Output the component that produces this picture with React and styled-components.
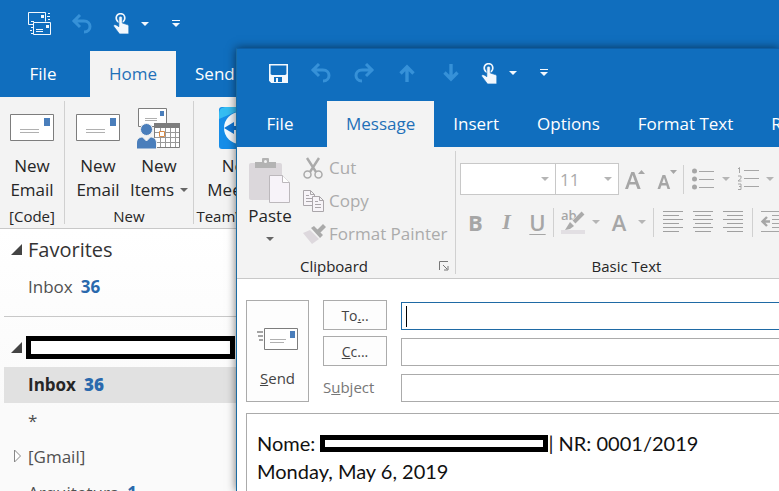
import React from "react";
import styled, { createGlobalStyle, css } from "styled-components";

const blue = "#106ebe";
const line = "#c8c8c8";
const dim = "#ababab";

const GlobalStyle = createGlobalStyle`
  * { box-sizing: border-box; }
  body { margin: 0; font-family: "Open Sans", "Noto Sans", sans-serif; font-size: 17px; color: #262626; }
  button, input, select, textarea { font: inherit; color: inherit; border-radius: 0; margin: 0; padding: 0; }
  button { border: 0; background: none; white-space: nowrap; }
  svg { display: block; flex: none; }
`;

const Desktop = styled.div`
  position: relative;
  min-height: 100vh;
  overflow: hidden;
  background: #fcfcfc;
`;

const MainWindow = styled.div`
  display: flex;
  flex-direction: column;
  height: 100vh;
  overflow: hidden;
`;

const ComposeWindow = styled.section`
  position: absolute;
  top: 48px;
  left: 236px;
  right: 0;
  bottom: 0;
  display: flex;
  flex-direction: column;
  overflow: hidden;
  background: #fff;
  border-top: 1px solid #0d5ea5;
  border-left: 1px solid #1a6ba3;
  box-shadow: 0 0 9px rgba(0, 0, 0, 0.55);
`;

const QuickAccess = styled.header`
  display: flex;
  align-items: center;
  flex: none;
  height: ${(p) => p.$height}px;
  padding: 0 20px 4px;
  background: ${blue};
`;

const QuickButton = styled.button`
  display: flex;
  align-items: center;
  justify-content: center;
  flex: none;
  width: ${(p) => p.$width}px;
  height: 40px;
  color: ${(p) => (p.$muted ? "#3691d8" : "#f3f8fd")};
`;

const Tabs = styled.nav`
  display: flex;
  flex: none;
  height: 46px;
  background: ${blue};
`;

const Tab = styled.button`
  flex: none;
  padding: 0 19px 2px;
  background: ${(p) => (p.$active ? "#f3f3f3" : "transparent")};
  color: ${(p) => (p.$active ? "#1f70b8" : "#fff")};
  ${(p) => p.$file && css`
    width: 90px;
    padding: 0 4px 2px 0;
  `}
`;

const Ribbon = styled.div`
  display: flex;
  flex: none;
  height: 132px;
  padding: 4px 0;
  background: #f3f3f3;
  border-bottom: 1px solid ${line};
`;

const Group = styled.section`
  display: flex;
  flex-direction: column;
  flex: none;
  width: ${(p) => p.$width}px;
  border-right: 1px solid #d0d0d0;
`;

const GroupBody = styled.div`
  display: flex;
  flex: 1;
  justify-content: ${(p) => (p.$start ? "flex-start" : "center")};
`;

const GroupLabel = styled.div`
  display: flex;
  align-items: center;
  justify-content: center;
  height: 20px;
  margin-bottom: -2px;
  font-size: 15px;
  line-height: 20px;
  white-space: nowrap;
`;

const LabelText = styled.span`
  flex: 1;
  padding-right: 8px;
  text-align: center;
`;

const Launcher = styled.button`
  width: 16px;
  height: 16px;
`;

const LargeButton = styled.button`
  display: flex;
  flex-direction: column;
  align-items: center;
  width: ${(p) => p.$width}px;
  line-height: 24px;
`;

const LargeIcon = styled.span`
  display: flex;
  align-items: center;
  justify-content: center;
  height: ${(p) => p.$height || 53}px;
`;

const CaretLine = styled.span`
  display: flex;
  align-items: center;
  gap: 6px;
`;

const FolderPane = styled.nav`
  flex: 1;
  padding: 3px 0 0 4px;
  background: linear-gradient(#fff, #fafafa 180px);
`;

const FolderSection = styled.div`
  padding-bottom: ${(p) => (p.$ruled ? 11 : 0)}px;
  margin-bottom: ${(p) => (p.$ruled ? 13 : 0)}px;
  border-bottom: ${(p) => (p.$ruled ? `1px solid ${line}` : "0")};
`;

const FolderRow = styled.button`
  display: grid;
  grid-template-columns: 24px auto auto;
  justify-content: start;
  align-items: center;
  width: 100%;
  height: 36px;
  padding-bottom: 2px;
  text-align: left;
  color: ${(p) => (p.$selected ? "#262626" : "#505050")};
  font-weight: ${(p) => (p.$selected ? 700 : 400)};
  background: ${(p) => (p.$selected ? "#e1e1e1" : "transparent")};
`;

const FolderHeading = styled(FolderRow)`
  height: 37px;
  font-size: 20px;
  color: #333;
`;

const TwistySlot = styled.span`
  padding-left: 7px;
`;

const Count = styled.b`
  margin-left: 8px;
  color: #2a69ad;
`;

const Redaction = styled.span`
  display: inline-block;
  border: 5px solid #000;
  background: #fff;
  width: ${(p) => p.$width}px;
  height: ${(p) => p.$height}px;
`;

const AccountBox = styled(Redaction)`
  margin-left: -2px;
`;

const PasteButton = styled(LargeButton)`
  margin-left: 3px;
  padding-top: 4px;
`;

const ClipboardList = styled.div`
  display: flex;
  flex-direction: column;
  padding-left: 3px;
`;

const CommandButton = styled.button`
  display: grid;
  grid-template-columns: 26px auto;
  justify-content: start;
  align-items: center;
  height: 33px;
  color: ${dim};
  text-align: left;
`;

const FontTools = styled.div`
  display: flex;
  flex-direction: column;
  gap: 11px;
  padding: 12px 0 0 4px;
`;

const ToolRow = styled.div`
  display: flex;
  align-items: center;
  height: 32px;
  color: ${dim};
`;

const ToolButton = styled.button`
  display: flex;
  align-items: center;
  justify-content: center;
  flex: none;
  width: ${(p) => p.$width}px;
  height: 30px;
  color: #a6a6a6;
`;

const Letter = styled.span`
  font-size: 22px;
  line-height: 28px;
  font-weight: ${(p) => (p.$bold ? 700 : 600)};
  font-style: ${(p) => (p.$italic ? "italic" : "normal")};
  font-family: ${(p) => (p.$italic ? '"Liberation Serif", serif' : "inherit")};
  text-decoration: ${(p) => (p.$underline ? "underline" : "none")};
  text-decoration-thickness: 1px;
  text-underline-offset: 3px;
`;

const Rule = styled.span`
  flex: none;
  width: 1px;
  height: 29px;
  margin-left: ${(p) => (p.$spaced ? 7 : 0)}px;
  background: #d0d0d0;
`;

const Combo = styled.span`
  display: grid;
  grid-template-columns: 1fr 14px;
  align-items: center;
  flex: none;
  width: ${(p) => p.$width}px;
  height: 32px;
  margin-right: ${(p) => (p.$joined ? -1 : 0)}px;
  border: 1px solid ${line};
  background: #fff;
`;

const ComboSelect = styled.select`
  grid-area: 1 / 1 / 2 / 3;
  width: 100%;
  height: 30px;
  padding-left: 4px;
  appearance: none;
  border: 0;
  background: transparent;
  color: ${dim};
`;

const ComboCaret = styled.span`
  grid-area: 1 / 2;
  pointer-events: none;
`;

const Form = styled.form`
  display: flex;
  flex-direction: column;
  flex: 1;
  padding: 21px 0 0 9px;
`;

const Envelope = styled.div`
  display: grid;
  grid-template-columns: 63px 64px 1fr;
  grid-template-rows: repeat(3, 30px);
  gap: 6px 14px;
  margin: 0 -2px 11px 0;
  color: #444;
`;

const SendButton = styled.button`
  grid-row: 1 / 4;
  display: flex;
  flex-direction: column;
  align-items: center;
  gap: 18px;
  padding-top: 27px;
  border: 1px solid #ababab;
  background: #fdfdfd;
  font-size: 15px;
`;

const RecipientButton = styled.button`
  border: 1px solid #ababab;
  background: #fdfdfd;
  font-size: 14px;
`;

const SubjectLabel = styled.label`
  align-self: center;
  color: #777;
  font-size: 15px;
`;

const Field = styled.span`
  display: flex;
  align-items: center;
  align-self: end;
  height: 28px;
  padding-left: 4px;
  border: 1px solid ${(p) => (p.$active ? "#1f6aa5" : "#ababab")};
`;

const TextCursor = styled.span`
  width: 1px;
  height: 21px;
  background: #000;
`;

const FieldInput = styled.input`
  flex: 1;
  min-width: 0;
  height: 24px;
  border: 0;
  outline: 0;
  background: transparent;
`;

const Message = styled.article`
  flex: 1;
  padding: 15px 10px;
  border: solid #ababab;
  border-width: 1px 0 0 1px;
  font-family: Lato, "Open Sans", sans-serif;
  font-size: 20px;
  line-height: 28px;
  color: #111;
`;

const MessageLine = styled.p`
  display: flex;
  align-items: center;
  margin: 0;
  white-space: pre;
`;

const Caret = ({ color = "currentColor" }) => (
  <svg width="8" height="4" viewBox="0 0 8 4" fill={color}><path d="M0 0h8L4 4z" /></svg>
);
const CustomizeIcon = () => (
  <svg width="8" height="8" viewBox="0 0 8 8" fill="currentColor"><path d="M0 0h8v1H0zM0 3h8L4 7z" /></svg>
);
const UndoIcon = () => (
  <svg width="22" height="20" viewBox="0 0 22 20" fill="none" stroke="currentColor" strokeWidth="3">
    <path d="M2 7h11c8 0 8 11 0 11M9 1L3 7l6 6" />
  </svg>
);
const RedoIcon = () => (
  <svg width="22" height="20" viewBox="0 0 22 20" fill="none" stroke="currentColor" strokeWidth="3">
    <path d="M20 7H9c-8 0-8 11 0 11M13 1l6 6-6 6" />
  </svg>
);
const UpIcon = () => (
  <svg width="16" height="18" viewBox="0 0 16 18" fill="none" stroke="currentColor" strokeWidth="3.4"><path d="M8 18V3M1.5 9.5L8 3l6.5 6.5" /></svg>
);
const DownIcon = () => (
  <svg width="16" height="18" viewBox="0 0 16 18" fill="none" stroke="currentColor" strokeWidth="3.4"><path d="M8 0v15M1.5 8.5L8 15l6.5-6.5" /></svg>
);
const TouchIcon = () => (
  <svg width="16" height="21" viewBox="0 0 16 21">
    <circle cx="7.5" cy="5" r="4.3" fill="none" stroke="currentColor" strokeWidth="1.7" />
    <path fill="currentColor" stroke={blue} strokeWidth=".7" d="M5.8 5c0-2.4 3.5-2.4 3.5 0v5l5 1.6c1 .4 1.5 1 1.5 2V21H6.5L.5 13c.3-2 2.5-1.7 5.3.7z" />
  </svg>
);
const SaveIcon = () => (
  <svg width="19" height="19" viewBox="0 0 19 19">
    <path fill="none" stroke="currentColor" strokeWidth="1.6" d="M.8.8h17.4v17.4H2.5L.8 16.5z" />
    <path fill="currentColor" d="M1 10l2 1h13l2-1v8.5H2.5L1 17z" />
    <path fill={blue} d="M5 13h9v5H5z" /><path fill="currentColor" d="M7 14h2v4H7zM13 13h1.5v5H13z" />
  </svg>
);
const SendReceiveIcon = () => (
  <svg width="24" height="24" viewBox="0 0 24 24" fill="none" stroke="currentColor">
    <path d="M5.5 12.5h-5v-12h17v9M3 9.5h3M20 1.5h2M19 4.5h3M20 7.5h2M3 15.5h2M2 18.5h2M3 21.5h2" />
    <path d="M5.5 10.5h17v12h-17zM8 17.5h7M8 19.5h7" /><path fill="currentColor" stroke="none" d="M13 3h3v3h-3zM18 13h3v3h-3z" />
  </svg>
);
const MailIcon = () => (
  <svg width="44" height="27" viewBox="0 0 44 27">
    <path fill="#fff" stroke="#7d7d7d" d="M.5.5h43v26H.5z" /><path fill="#4a7ebb" d="M34 4h6v8h-6z" />
    <path stroke="#b0b0b0" d="M10 15.5h19M10 18.5h19" />
  </svg>
);
const SendMailIcon = () => (
  <svg width="42" height="22" viewBox="0 0 42 22">
    <path fill="#fff" stroke="#7d7d7d" d="M7.5.5h33v21h-33z" /><path fill="#4a7ebb" d="M33 3h5v7h-5z" />
    <path stroke="#b0b0b0" d="M13 11.5h16M13 14.5h14" /><path stroke="#888" strokeWidth="1.3" d="M0 4h6M1 8h5M2 12h4" />
  </svg>
);
const ItemsIcon = () => (
  <svg width="44" height="42" viewBox="0 0 44 42">
    <path fill="#fff" stroke="#7d7d7d" d="M1.5 1.5h28v18h-28z" /><path fill="#4a7ebb" d="M23 4h4v5h-4z" />
    <path stroke="#b0b0b0" d="M8 11.5h12M8 13.5h12" />
    <path fill="#fff" stroke="#7d7d7d" d="M17.5 17.5h25v23h-25z" /><path fill="#7d7d7d" d="M17 16h26v5H17z" />
    <path stroke="#999" fill="none" d="M23.5 21v19M28.5 21v19M33.5 21v19M38.5 21v19M18 25.5h24M18 30.5h24M18 35.5h24" />
    <path fill="#fff" stroke="#d88a45" d="M22.5 24.5h5v5h-5z" />
    <g fill="#4a7ebb" stroke="#f3f3f3"><circle cx="9.5" cy="22.5" r="6" /><path d="M-.5 42v-6c0-4 3-6 6-6l4 4 4-4c3 0 6 2 6 6v6z" /></g>
  </svg>
);
const TeamIcon = () => (
  <svg width="42" height="42" viewBox="0 0 42 42">
    <rect width="42" height="42" rx="3" fill="#168de8" /><path d="M0 8C0 2 2 0 8 0h20L0 12z" fill="#35bdf2" />
    <circle cx="21" cy="21" r="16" fill="#f4faff" /><path fill="#0f76d5" d="M5 21l10-6v4h12v-4l10 6-10 6v-4H15v4z" />
  </svg>
);
const PasteIcon = () => (
  <svg width="42" height="46" viewBox="0 0 42 46">
    <rect y="6" width="33" height="37" rx="2" fill="#dbd7db" />
    <path fill="#b3b3b3" d="M6 5h7V2q0-1 1-1h5q1 0 1 1v3h7v6H6z" /><circle cx="16.5" cy="4.5" r="1.5" fill="#f3f3f3" />
    <path fill="#f7f3f9" stroke="#bcb8bc" d="M20.5 18.5h13l7 7v20h-20z" /><path fill="#fff" stroke="#bcb8bc" d="M33.5 18.5v7h7" />
  </svg>
);
const CutIcon = () => (
  <svg width="20" height="22" viewBox="0 0 20 22" fill="none" stroke="#aaa" strokeWidth="1.5">
    <path strokeWidth="2.4" d="M4 1l9 14M16 1L7 15" /><circle cx="4.5" cy="17.5" r="3.5" fill="#f3f3f3" /><circle cx="15.5" cy="17.5" r="3.5" fill="#f3f3f3" />
  </svg>
);
const CopyIcon = () => (
  <svg width="21" height="22" viewBox="0 0 21 22" fill="#f7f4f8" stroke="#aaa6aa">
    <path d="M.5.5h7l4 4v11H.5zM7.5.5v4h4M3 5.5h3M3 8.5h6M3 11.5h6" /><path d="M9.5 6.5h7l4 4v11h-11zM16.5 6.5v4h4M12 11.5h3M12 14.5h6M12 17.5h6" />
  </svg>
);
const BrushIcon = () => (
  <svg width="23" height="20" viewBox="0 0 23 20">
    <path fill="#ddd8dd" d="M0 9l7-3 9 9-7 5z" /><path fill="#aaa" d="M8 4l3-2 9 9-3 3zM14 6l6-6 3 3-6 6z" />
  </svg>
);
const LauncherIcon = () => (
  <svg width="10" height="10" viewBox="0 0 10 10" fill="none" stroke="#777"><path d="M.5 9V.5H9M4 4l4 4M9 5v4H5" /></svg>
);
const SolidTwisty = () => (
  <svg width="12" height="12" viewBox="0 0 12 12"><path fill="#444" d="M11 0v11H0z" /></svg>
);
const OpenTwisty = () => (
  <svg width="12" height="14" viewBox="0 0 12 14"><path fill="#fff" stroke="#888" d="M3.5 1v12l6-6z" /></svg>
);
const SizeIcon = ({ down }) => (
  <svg width="21" height="22" viewBox="0 0 21 22" fill="#a6a6a6">
    {down
      ? <><path d="M13 2h7l-3.5 4z" /><path d="M5.5 7L.5 21h2.7l1.2-3.5h5L10.5 21h2.7L8.3 7zM5.2 15L7 9.8 8.7 15z" fillRule="evenodd" /></>
      : <><path d="M13 6h7l-3.5-4z" /><path d="M6.3 4L0 21h3l1.5-4.5h6.3L12.5 21h3.2L9.3 4zM5.3 14l2.3-7 2.4 7z" fillRule="evenodd" /></>}
  </svg>
);
const BulletIcon = () => (
  <svg width="22" height="22" viewBox="0 0 22 22" fill="#a6a6a6">
    <circle cx="2.5" cy="3" r="2.5" /><circle cx="2.5" cy="11" r="2.5" /><circle cx="2.5" cy="19" r="2.5" />
    <path d="M7 3h15v1H7zM7 11h15v1H7zM7 19h15v1H7z" />
  </svg>
);
const NumberIcon = () => (
  <svg width="22" height="24" viewBox="0 0 22 24" fill="none" stroke="#a6a6a6">
    <path d="M1 2l1.500-1.500V6M1 9h3v2.500L1 14h3.500M1 17h3v5.500H1M2 19.500h2M7 3.500h15M7 11.500h15M7 19.500h15" />
  </svg>
);
const AlignIcon = ({ kind }) => {
  const shift = { left: 0, center: 2, right: 4 }[kind];
  return (
    <svg width="20" height="22" viewBox="0 0 20 22" stroke="#a0a0a0">
      <path d={`M0 .5h20M${shift} 4.5h16M0 8.5h20M${shift} 12.5h16M0 16.5h20M${shift} 20.5h16`} />
    </svg>
  );
};
const IndentIcon = () => (
  <svg width="22" height="22" viewBox="0 0 22 22" stroke="#a6a6a6" fill="none">
    <path d="M0 .5h22M11 4.5h11M11 8.5h11M11 12.5h11M11 16.5h11M0 20.5h22" /><path strokeWidth="2.4" d="M9 10.5H2M6 6l-4.5 4.5L6 15" />
  </svg>
);
const HighlightIcon = () => (
  <svg width="25" height="25" viewBox="0 0 25 25">
    <path fill="#e2dfe3" d="M0 20h24v4H0z" />
    <text x="0" y="10" fontSize="13" fontFamily="Open Sans" fontWeight="600" fill="#a6a6a6">ab</text>
    <path stroke="#f3f3f3" strokeWidth="5" d="M22 4L9 15" /><path stroke="#aaa" strokeWidth="4" d="M22 3l-9 9" /><path fill="#aaa" d="M9 12l4 4-4 3-5 1z" />
  </svg>
);

function DropCaret({ label }) {
  return <ToolButton type="button" $width={8} aria-label={label}><Caret color="#b5b5b5" /></ToolButton>;
}

function FontCombo({ width, label, value, joined }) {
  return (
    <Combo $width={width} $joined={joined}>
      <ComboSelect aria-label={label} defaultValue={value}><option value={value}>{value}</option></ComboSelect>
      <ComboCaret><Caret color="#b5b5b5" /></ComboCaret>
    </Combo>
  );
}

function Quick({ width, label, muted, children }) {
  return <QuickButton type="button" $width={width} $muted={muted} aria-label={label}>{children}</QuickButton>;
}

function Folder({ name, count, selected, twisty }) {
  return (
    <FolderRow type="button" $selected={selected}>
      <TwistySlot>{twisty}</TwistySlot>
      <span>{name}</span>
      {count && <Count>{count}</Count>}
    </FolderRow>
  );
}

function Outlook() {
  return (
    <MainWindow>
      <QuickAccess $height={51}>
        <Quick width={40} label="Send and receive"><SendReceiveIcon /></Quick>
        <Quick width={44} label="Undo" muted><UndoIcon /></Quick>
        <Quick width={34} label="Touch mode"><TouchIcon /></Quick>
        <Quick width={14} label="Touch mode options"><Caret /></Quick>
        <Quick width={48} label="Customize toolbar"><CustomizeIcon /></Quick>
      </QuickAccess>
      <Tabs>
        <Tab type="button" $file>File</Tab>
        <Tab type="button" $active>Home</Tab>
        <Tab type="button">Send / Receive</Tab>
      </Tabs>
      <Ribbon>
        <Group $width={65}>
          <GroupBody>
            <LargeButton type="button" $width={62}><LargeIcon><MailIcon /></LargeIcon><span>New</span><span>Email</span></LargeButton>
          </GroupBody>
          <GroupLabel>[Code]</GroupLabel>
        </Group>
        <Group $width={129}>
          <GroupBody>
            <LargeButton type="button" $width={60}><LargeIcon><MailIcon /></LargeIcon><span>New</span><span>Email</span></LargeButton>
            <LargeButton type="button" $width={62}>
              <LargeIcon><ItemsIcon /></LargeIcon><span>New</span><CaretLine>Items<Caret color="#666" /></CaretLine>
            </LargeButton>
          </GroupBody>
          <GroupLabel>New</GroupLabel>
        </Group>
        <Group $width={92}>
          <GroupBody>
            <LargeButton type="button" $width={80}><LargeIcon><TeamIcon /></LargeIcon><span>New</span><span>Meeting</span></LargeButton>
          </GroupBody>
          <GroupLabel>TeamViewer</GroupLabel>
        </Group>
      </Ribbon>
      <FolderPane aria-label="Folders">
        <FolderSection $ruled>
          <FolderHeading type="button"><TwistySlot><SolidTwisty /></TwistySlot><span>Favorites</span></FolderHeading>
          <Folder name="Inbox" count="36" />
        </FolderSection>
        <FolderSection>
          <FolderHeading type="button" aria-label="Account">
            <TwistySlot><SolidTwisty /></TwistySlot><AccountBox $width={209} $height={23} />
          </FolderHeading>
          <Folder name="Inbox" count="36" selected />
          <Folder name="*" />
          <Folder name="[Gmail]" twisty={<OpenTwisty />} />
          <Folder name="Arquitetura" count="1" />
        </FolderSection>
      </FolderPane>
    </MainWindow>
  );
}

function Compose() {
  return (
    <ComposeWindow aria-label="New message">
      <QuickAccess $height={52}>
        <Quick width={42} label="Save"><SaveIcon /></Quick>
        <Quick width={44} label="Undo" muted><UndoIcon /></Quick>
        <Quick width={42} label="Redo" muted><RedoIcon /></Quick>
        <Quick width={44} label="Previous item" muted><UpIcon /></Quick>
        <Quick width={44} label="Next item" muted><DownIcon /></Quick>
        <Quick width={32} label="Touch mode"><TouchIcon /></Quick>
        <Quick width={16} label="Touch mode options"><Caret /></Quick>
        <Quick width={46} label="Customize toolbar"><CustomizeIcon /></Quick>
      </QuickAccess>
      <Tabs>
        <Tab type="button" $file>File</Tab>
        <Tab type="button" $active>Message</Tab>
        <Tab type="button">Insert</Tab>
        <Tab type="button">Options</Tab>
        <Tab type="button">Format Text</Tab>
        <Tab type="button">Review</Tab>
      </Tabs>
      <Ribbon>
        <Group $width={219}>
          <GroupBody $start>
            <PasteButton type="button" $width={60}>
              <LargeIcon $height={49}><PasteIcon /></LargeIcon><span>Paste</span><LargeIcon $height={22}><Caret color="#666" /></LargeIcon>
            </PasteButton>
            <ClipboardList>
              <CommandButton type="button"><CutIcon /><span>Cut</span></CommandButton>
              <CommandButton type="button"><CopyIcon /><span>Copy</span></CommandButton>
              <CommandButton type="button"><BrushIcon /><span>Format Painter</span></CommandButton>
            </ClipboardList>
          </GroupBody>
          <GroupLabel>
            <LabelText>Clipboard</LabelText>
            <Launcher type="button" aria-label="Clipboard options"><LauncherIcon /></Launcher>
          </GroupLabel>
        </Group>
        <Group $width={342}>
          <GroupBody $start>
            <FontTools>
              <ToolRow>
                <FontCombo width={96} label="Font" value="" joined />
                <FontCombo width={64} label="Font size" value="11" />
                <ToolButton type="button" $width={32} aria-label="Grow font"><SizeIcon /></ToolButton>
                <ToolButton type="button" $width={32} aria-label="Shrink font"><SizeIcon down /></ToolButton>
                <Rule />
                <ToolButton type="button" $width={38} aria-label="Bullets"><BulletIcon /></ToolButton>
                <DropCaret label="Bullet options" />
                <ToolButton type="button" $width={36} aria-label="Numbering"><NumberIcon /></ToolButton>
                <DropCaret label="Numbering options" />
              </ToolRow>
              <ToolRow>
                <ToolButton type="button" $width={31} aria-label="Bold"><Letter $bold>B</Letter></ToolButton>
                <ToolButton type="button" $width={31} aria-label="Italic"><Letter $bold $italic>I</Letter></ToolButton>
                <ToolButton type="button" $width={31} aria-label="Underline"><Letter $underline>U</Letter></ToolButton>
                <Rule />
                <ToolButton type="button" $width={38} aria-label="Highlight"><HighlightIcon /></ToolButton>
                <DropCaret label="Highlight colors" />
                <ToolButton type="button" $width={38} aria-label="Font color"><Letter>A</Letter></ToolButton>
                <DropCaret label="Font colors" />
                <Rule $spaced />
                <ToolButton type="button" $width={38} aria-label="Align left"><AlignIcon kind="left" /></ToolButton>
                <ToolButton type="button" $width={22} aria-label="Align center"><AlignIcon kind="center" /></ToolButton>
                <ToolButton type="button" $width={38} aria-label="Align right"><AlignIcon kind="right" /></ToolButton>
                <Rule />
                <ToolButton type="button" $width={38} aria-label="Decrease indent"><IndentIcon /></ToolButton>
              </ToolRow>
            </FontTools>
          </GroupBody>
          <GroupLabel>Basic Text</GroupLabel>
        </Group>
      </Ribbon>
      <Form onSubmit={(e) => e.preventDefault()}>
        <Envelope>
          <SendButton type="submit"><SendMailIcon /><span><u>S</u>end</span></SendButton>
          <RecipientButton type="button">To<u>.</u>..</RecipientButton>
          <Field $active><TextCursor /><FieldInput aria-label="To" /></Field>
          <RecipientButton type="button"><u>C</u>c...</RecipientButton>
          <Field><FieldInput aria-label="Cc" /></Field>
          <SubjectLabel htmlFor="subject">S<u>u</u>bject</SubjectLabel>
          <Field><FieldInput id="subject" /></Field>
        </Envelope>
        <Message>
          <MessageLine>Nome: <Redaction $width={228} $height={17} />| NR: 0001/2019</MessageLine>
          <MessageLine>Monday, May 6, 2019</MessageLine>
        </Message>
      </Form>
    </ComposeWindow>
  );
}

export default function App() {
  return (
    <Desktop>
      <GlobalStyle />
      <Outlook />
      <Compose />
    </Desktop>
  );
}
